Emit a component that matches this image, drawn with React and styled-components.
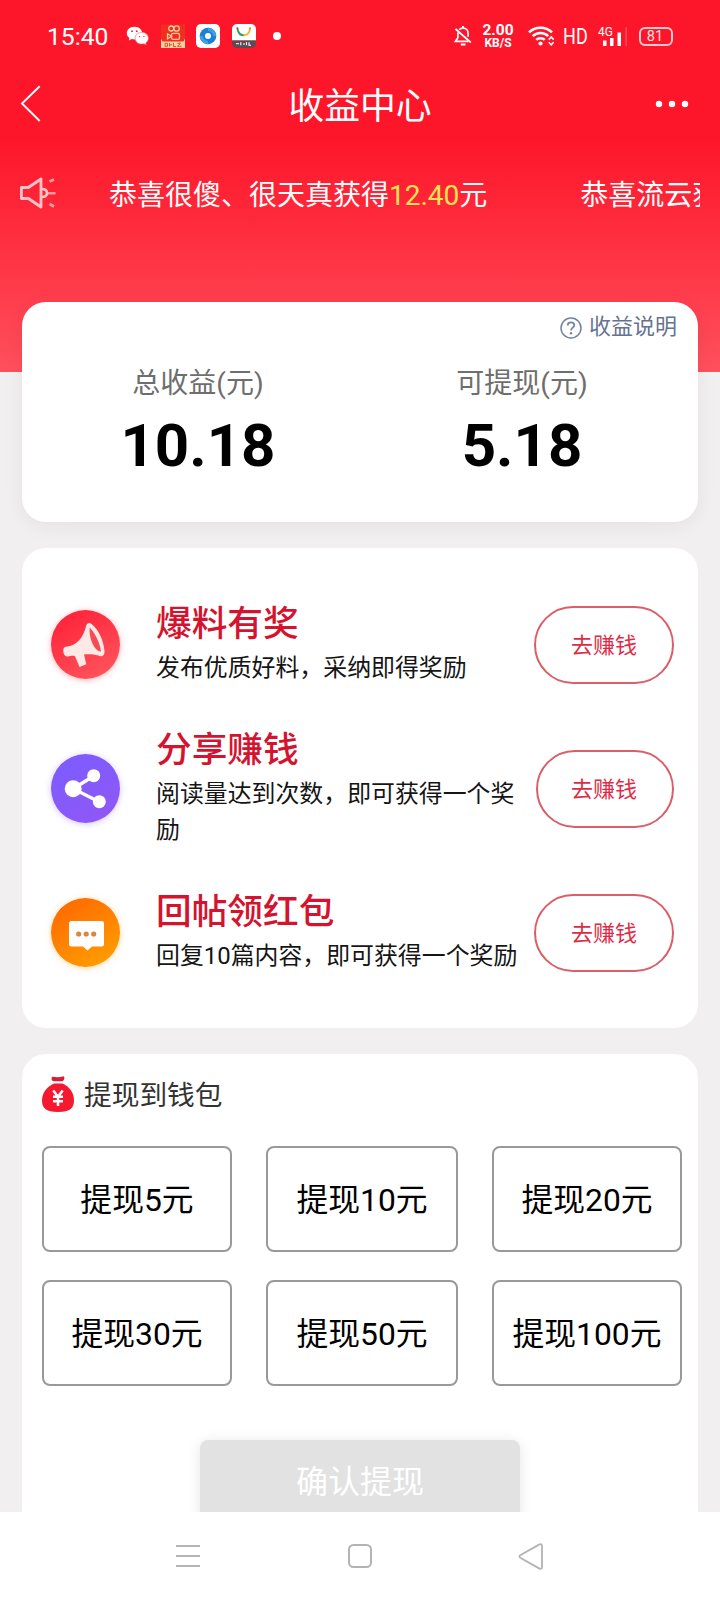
import React from 'react';
import styled, { createGlobalStyle } from 'styled-components';

const GlobalStyle = createGlobalStyle`
  * {
    box-sizing: border-box;
  }

  body {
    margin: 0;
    background: #f2eff0;
    font-family: Roboto, 'Noto Sans CJK SC', sans-serif;
  }

  svg {
    display: block;
    flex: none;
  }

  button {
    padding: 0;
    font-family: inherit;
  }
`;

const tasks = [
  { id: 'report', title: '爆料有奖', desc: '发布优质好料，采纳即得奖励', buttonWidth: 140 },
  { id: 'share', title: '分享赚钱', desc: '阅读量达到次数，即可获得一个奖励', buttonWidth: 138 },
  { id: 'reply', title: '回帖领红包', desc: '回复10篇内容，即可获得一个奖励', buttonWidth: 140 },
];

const amounts = [5, 10, 20, 30, 50, 100];

const WechatIcon = () => (
  <svg width="23" height="20" viewBox="0 0 22 20">
    <path d="M8 .8C3.600.8.3 3.600.3 7.200c0 2 1 3.600 2.600 4.700L2.300 14.500l2.900-1.500c.9.300 1.800.400 2.800.400 4.400 0 7.700-2.700 7.700-6.200S12.400.8 8 .8z" fill="#fff" />
    <path d="M15.300 6.300c-3.800 0-6.700 2.500-6.700 5.900s2.900 5.900 6.700 5.900c.8 0 1.500-.1 2.200-.3l2.300 1.300-.5-2.200c1.500-1 2.600-2.600 2.600-4.700 0-3.400-2.900-5.900-6.600-5.900z" fill="#fff" stroke="#fc5a66" strokeWidth=".6" />
    <circle cx="5.500" cy="5.200" r=".9" fill="#fc172a" />
    <circle cx="10.300" cy="5.200" r=".9" fill="#fc172a" />
    <circle cx="13.200" cy="10.600" r=".7" fill="#fc172a" />
    <circle cx="17.400" cy="10.600" r=".7" fill="#fc172a" />
  </svg>
);

const VideoAppIcon = () => (
  <svg width="24" height="24" viewBox="0 0 24 24">
    <rect y=".5" width="24" height="23.500" fill="#f0301f" />
    <g fill="none" stroke="#ffc9a0" strokeWidth="1.300">
      <circle cx="10.200" cy="4.500" r="2.500" />
      <circle cx="15.600" cy="4.500" r="2.700" />
      <rect x="10.500" y="9.300" width="8" height="6" rx="1.600" />
      <path d="M10.500 12.300 6.500 9.800v5z" />
    </g>
    <path d="M0 14.500l1.500 3h21l1.500-3v9.500H0z" fill="#ffd2a0" />
    <path d="M4 19.300h2.500v3H4zM8.500 19v3.500M8.500 20.800h2.500M12.500 19v3.500h2.500M16.500 19.300h3l-3 3h4" fill="none" stroke="#e2502f" strokeWidth="1" />
  </svg>
);

const EyeAppIcon = () => (
  <svg width="24" height="24" viewBox="0 0 24 24">
    <rect width="24" height="24" rx="5" fill="#fff" />
    <circle cx="12" cy="12" r="8.300" fill="#1b7fd6" />
    <path d="M12 3.700a8.300 8.300 0 0 1 8.300 8.300h-3.300a5 5 0 0 0-5-5z" fill="#3f9fe6" />
    <path d="M12 20.300A8.300 8.300 0 0 1 3.700 12H7a5 5 0 0 0 5 5z" fill="#3f9fe6" />
    <circle cx="12" cy="12" r="3" fill="#fff" />
    <circle cx="12" cy="12" r="1" fill="#cfe6f8" />
  </svg>
);

const SmileAppIcon = () => (
  <svg width="24" height="24" viewBox="0 0 24 24">
    <path d="M5 0h14a5 5 0 0 1 5 5v11.500H0V5a5 5 0 0 1 5-5z" fill="#fff" />
    <path d="M5.500 5c.6 3.800 3 6.300 6.500 6.300" fill="none" stroke="#3aa06b" strokeWidth="2" />
    <path d="M11.500 11.300c3.400 0 6-2.200 6.500-6.300" fill="none" stroke="#f2b63c" strokeWidth="2" />
    <circle cx="5.400" cy="4.300" r="1.100" fill="#a04a36" />
    <circle cx="18" cy="4.300" r="1.100" fill="#e8863c" />
    <path d="M0 16.500h24V19a5 5 0 0 1-5 5H5a5 5 0 0 1-5-5z" fill="#5d4a55" />
    <path d="M4 19.800h3M8.800 18.300v3M11 20h2M14.500 18.300v3M17 18.300v3h2" stroke="#fff" strokeWidth="1.100" fill="none" />
  </svg>
);

const BellOffIcon = () => (
  <svg width="18" height="22" viewBox="0 0 18 22" fill="none" stroke="#fff" strokeWidth="1.700">
    <path d="M5.200 4.700C6.300 3.500 7.500 3.100 9 3.100c3.200 0 5.100 2.400 5.100 5.300v3.300M3.900 7.500v5.300L1.500 16.300h13" />
    <path d="M9 1v2M6.800 19.500h4.700" strokeWidth="2" />
    <path d="M1.500 4 16.800 17.500" />
  </svg>
);

const WifiIcon = () => (
  <svg width="28" height="22" viewBox="0 0 28 22" fill="none" stroke="#fff">
    <path d="M1 7.400a16.500 16.500 0 0 1 23 0" strokeWidth="2.600" />
    <path d="M4.700 11.200a11 11 0 0 1 15.600 0" strokeWidth="2.600" />
    <path d="M8.300 14.900a6 6 0 0 1 8.400 0" strokeWidth="2.600" />
    <circle cx="12.500" cy="18.500" r="2.100" fill="#fff" stroke="none" />
    <path d="M20.800 14.600l2.400-2.600 2.400 2.600M20.800 17.200l2.400 2.600 2.400-2.600" strokeWidth="1.600" />
  </svg>
);

const SignalBars = () => (
  <svg width="26" height="19" viewBox="0 0 26 19" fill="#fff">
    <rect x="1" y="13.500" width="3.500" height="5.500" />
    <rect x="8" y="11" width="3.500" height="8" />
    <rect x="15.500" y="5.500" width="3.500" height="13.500" />
    <rect x="23.500" y="0" width="1.200" height="19" opacity=".3" />
  </svg>
);

const BackIcon = () => (
  <svg width="22" height="38" viewBox="0 0 22 38" fill="none" stroke="#fff" strokeWidth="1.900">
    <path d="M19.700 1.300 2 18.500 19.700 36" />
  </svg>
);

const MoreIcon = () => (
  <svg width="34" height="8" viewBox="0 0 34 8" fill="#fff">
    <circle cx="4" cy="4" r="3.200" />
    <circle cx="17" cy="4" r="3.200" />
    <circle cx="30" cy="4" r="3.200" />
  </svg>
);

const SpeakerIcon = () => (
  <svg width="36" height="32" viewBox="0 0 36 32" fill="none" stroke="#ffc3c8" strokeWidth="2.800">
    <path d="M1.400 10.500h7L21 2v28L8.400 21.500h-7z" strokeLinejoin="round" />
    <path d="M22 12c3.200 0 5 1.700 5 4s-1.800 4-5 4" strokeWidth="2.600" />
    <path d="M29.500 4.500l4.500-2M28 16.300h7.500M29.500 27l4.500 2.500" strokeWidth="2.600" opacity=".75" />
  </svg>
);

const HelpIcon = () => (
  <svg width="22" height="22" viewBox="0 0 22 22" fill="none" stroke="#7482a0" strokeWidth="1.500">
    <circle cx="11" cy="11" r="10" />
    <path d="M7.700 8.600c0-2 1.400-3.200 3.300-3.200s3.300 1.200 3.300 2.900c0 2.300-3.300 2.500-3.300 5.200" strokeWidth="1.800" />
    <circle cx="11" cy="16.200" r="1.200" fill="#7482a0" stroke="none" />
  </svg>
);

const HornGlyph = () => (
  <svg width="69" height="69" viewBox="0 0 69 69">
    <path d="M12.300 39.500c.3-2 1.700-2.700 4.200-3C26 35 32 28.500 35.300 15.500c.6-2.500 3.200-3.200 5.200-1.500C47.500 19.500 52.500 30 53.500 41c.3 3.800-1.600 6-4.600 5-5-1.700-10-2.300-15.900-1.500l2.300 9.800-6.800 2.800-4.500-10.800c-1.700-1.200-4.500 0-7 .3-3.500 0-5-3-4.700-7.100z" fill="#ffe9e7" />
    <path d="M38.700 17.500c5.300 5.500 10.300 15 11.300 24-3.500.3-7.300-4-9.500-10.500-1.600-4.500-2.300-9-1.800-13.500z" fill="#f94a52" />
  </svg>
);

const ShareGlyph = () => (
  <svg width="69" height="69" viewBox="0 0 69 69" fill="#fff">
    <path d="M42.700 22 22.200 34.700 48 47.700" fill="none" stroke="#fff" strokeWidth="3.400" />
    <circle cx="22.200" cy="34.700" r="8.500" />
    <circle cx="42.700" cy="21.700" r="6.500" />
    <circle cx="48.300" cy="47.700" r="6.500" />
  </svg>
);

const ChatGlyph = () => (
  <svg width="69" height="69" viewBox="0 0 69 69">
    <path d="M20.500 23h30a2.500 2.500 0 0 1 2.500 2.500v20.500a2.500 2.500 0 0 1-2.500 2.500H41l-4.500 4-4.500-4H20.500a2.500 2.500 0 0 1-2.500-2.500V25.500a2.500 2.500 0 0 1 2.500-2.500z" fill="#fff" />
    <g fill="#d9873f">
      <circle cx="27.700" cy="36" r="2.600" />
      <circle cx="35.200" cy="36" r="2.600" />
      <circle cx="42.700" cy="36" r="2.600" />
    </g>
  </svg>
);

const MoneyBagIcon = () => (
  <svg width="32" height="36" viewBox="0 0 32 36">
    <path d="M10.500.8c4 .6 7.500.6 11.300-.5 1.200 1.600.5 3.800-1.300 5h-9C9.500 4.500 8.800 2.300 10.500.8z" fill="#d81e34" />
    <path d="M12 7.500h8.500C27 10 32 17 32 24c0 8-3.500 12-16 12S0 32 0 24C0 17 5.500 10 12 7.500z" fill="#f5182f" />
    <path d="M11.300 14.500l4.700 6.300 4.700-6.300M16 20.500V30M11 20.800h10M11 25.300h10" fill="none" stroke="#fff" strokeWidth="2.500" />
  </svg>
);

const glyphs = {
  report: <HornGlyph />,
  share: <ShareGlyph />,
  reply: <ChatGlyph />,
};

const StatusBar = () => (
  <StatusRow>
    <Clock>15:40</Clock>
    <AppIcons>
      <WechatIcon />
      <VideoAppIcon />
      <EyeAppIcon />
      <SmileAppIcon />
    </AppIcons>
    <NoticeDot />
    <StatusRight>
      <BellOffIcon />
      <NetSpeed>
        <SpeedValue>2.00</SpeedValue>
        <SpeedUnit>KB/S</SpeedUnit>
      </NetSpeed>
      <WifiIcon />
      <HdLabel>HD</HdLabel>
      <Signal>
        <NetworkType>4G</NetworkType>
        <SignalBars />
      </Signal>
      <Battery>81</Battery>
    </StatusRight>
  </StatusRow>
);

const Task = ({ data }) => {
  const { id, title, desc, buttonWidth } = data;

  return (
    <TaskRow>
      <TaskIcon $type={id}>{glyphs[id]}</TaskIcon>
      <TaskText>
        <TaskTitle>{title}</TaskTitle>
        <TaskDesc>{desc}</TaskDesc>
      </TaskText>
      <EarnButton $width={buttonWidth}>去赚钱</EarnButton>
    </TaskRow>
  );
};

const App = () => (
  <Screen>
    <GlobalStyle />
    <Content>
      <StatusBar />
      <TitleBar>
        <BackIcon />
        <PageTitle>收益中心</PageTitle>
        <MoreIcon />
      </TitleBar>
      <Notice>
        <SpeakerIcon />
        <NoticeTrack>
          <span>恭喜很傻、很天真获得<Money>12.40</Money>元</span>
          <span>恭喜流云获得</span>
        </NoticeTrack>
      </Notice>
      <SummaryCard>
        <HelpLink>
          <HelpIcon />
          <HelpText>收益说明</HelpText>
        </HelpLink>
        <Totals>
          <Total>
            <TotalLabel>总收益(元)</TotalLabel>
            <TotalValue>10.18</TotalValue>
          </Total>
          <Total>
            <TotalLabel>可提现(元)</TotalLabel>
            <TotalValue>5.18</TotalValue>
          </Total>
        </Totals>
      </SummaryCard>
      <TaskCard>
        {tasks.map((task) => <Task key={task.id} data={task} />)}
      </TaskCard>
      <WalletCard>
        <WalletTitle>
          <MoneyBagIcon />
          <WalletTitleText>提现到钱包</WalletTitleText>
        </WalletTitle>
        <AmountGrid>
          {amounts.map((amount) => (
            <AmountButton key={amount}>{`提现${amount}元`}</AmountButton>
          ))}
        </AmountGrid>
        <ConfirmButton>确认提现</ConfirmButton>
      </WalletCard>
    </Content>
    <NavBar>
      <svg width="24" height="24" viewBox="0 0 24 24" stroke="#b3b3b3" strokeWidth="2">
        <path d="M0 2h24M0 12h24M0 22h24" />
      </svg>
      <svg width="24" height="24" viewBox="0 0 24 24" fill="none" stroke="#b3b3b3" strokeWidth="2">
        <rect x="1" y="1" width="22" height="22" rx="4.500" />
      </svg>
      <NavBackIcon width="25" height="27" viewBox="0 0 25 27" fill="none" stroke="#b3b3b3" strokeWidth="1.800" strokeLinejoin="round">
        <path d="M21.500 1.400 2.200 12.300c-1 .6-1 1.800 0 2.400l19.300 10.900c1 .6 2.500 0 2.500-1.400V2.800c0-1.400-1.500-2-2.500-1.400z" />
      </NavBackIcon>
    </NavBar>
  </Screen>
);

const Screen = styled.div`
  display: flex;
  flex-direction: column;
  width: 720px;
  height: 1600px;
  overflow: hidden;
`;

const Content = styled.main`
  flex: 1;
  min-height: 0;
  overflow: hidden;
  background: linear-gradient(#fd162a 0, #fd162a 140px, #ff505d 372px) no-repeat 0 0 / 100% 372px;
`;

const StatusRow = styled.div`
  display: flex;
  align-items: center;
  height: 72px;
  padding: 0 47px 0 47px;
  color: #fff;
`;

const Clock = styled.span`
  width: 79px;
  padding-top: 1px;
  font-size: 24.700px;
  line-height: 30px;
`;

const AppIcons = styled.div`
  display: flex;
  align-items: center;
  gap: 11.500px;
`;

const NoticeDot = styled.span`
  width: 8px;
  height: 8px;
  margin-left: 17px;
  border-radius: 50%;
  background: #fff;
`;

const StatusRight = styled.div`
  display: flex;
  align-items: center;
  margin-left: auto;
`;

const NetSpeed = styled.div`
  display: flex;
  flex-direction: column;
  align-items: center;
  width: 32px;
  margin: 1px 14px 0 10px;
  font-weight: 700;
`;

const SpeedValue = styled.span`
  font-size: 15.500px;
  line-height: 13px;
`;

const SpeedUnit = styled.span`
  font-size: 12px;
  line-height: 12px;
`;

const HdLabel = styled.span`
  width: 28px;
  margin: 1px 7px 0 7px;
  font-size: 21.500px;
  line-height: 24px;
  transform: scaleX(0.84);
  transform-origin: 0 50%;
`;

const Signal = styled.div`
  position: relative;
  display: flex;
  margin: 0 11px 0 4px;
`;

/* sits on top of the shorter bars */
const NetworkType = styled.span`
  position: absolute;
  top: -2px;
  left: -4px;
  font-size: 13.500px;
  line-height: 13px;
  transform: scaleX(0.88);
  transform-origin: 0 50%;
`;

const Battery = styled.span`
  width: 34px;
  height: 19px;
  border: 2px solid #ffc9cd;
  border-radius: 6px;
  color: #ffe3e5;
  font-size: 14.500px;
  line-height: 16px;
  text-align: center;
  text-indent: -2px;
`;

const TitleBar = styled.header`
  display: flex;
  align-items: center;
  justify-content: space-between;
  height: 64px;
  padding: 0 31px 0 20px;
`;

const PageTitle = styled.h1`
  margin: 0;
  padding: 6px 0 0 23px;
  color: #fff;
  font-size: 35.800px;
  font-weight: 400;
  line-height: 58px;
`;

const Notice = styled.div`
  display: flex;
  align-items: center;
  height: 40px;
  margin: 37px 20px 0;
`;

const NoticeTrack = styled.div`
  display: flex;
  flex: 1;
  gap: 93px;
  padding: 5px 0 0 53px;
  overflow: hidden;
  color: #fff;
  font-size: 28px;
  line-height: 40px;
  white-space: nowrap;
`;

const Money = styled.span`
  color: #fbe454;
`;

const Card = styled.section`
  margin: 0 22px;
  border-radius: 24px;
  background: #fff;
`;

const SummaryCard = styled(Card)`
  height: 220px;
  margin-top: 89px;
  padding: 9px 14px 0;
  box-shadow: 0 4px 20px rgba(0, 0, 0, 0.06);
`;

const HelpLink = styled.div`
  display: flex;
  align-items: center;
  justify-content: flex-end;
  gap: 7px;
  height: 34px;
  padding-right: 7px;
`;

const HelpText = styled.span`
  padding-bottom: 3px;
  color: #66738f;
  font-size: 22px;
  line-height: 29px;
`;

const Totals = styled.div`
  display: grid;
  grid-template-columns: 1fr 1fr;
  margin-top: 18px;
`;

const Total = styled.div`
  display: flex;
  flex-direction: column;
  align-items: center;
`;

const TotalLabel = styled.span`
  color: #6e6e6e;
  font-size: 28px;
  line-height: 42px;
`;

const TotalValue = styled.strong`
  color: #000;
  font-size: 60px;
  font-weight: 700;
  line-height: 82px;
`;

const TaskCard = styled(Card)`
  margin-top: 26px;
  padding: 25px 24px 23px 28px;
`;

const TaskRow = styled.div`
  display: flex;
  align-items: center;
  height: 144px;
`;

const iconColors = {
  report: ['linear-gradient(150deg, #ff1c35, #ff5a60)', 'rgba(255, 70, 80, 0.4)'],
  share: ['linear-gradient(150deg, #7a5cff, #9257f5)', 'rgba(130, 90, 250, 0.35)'],
  reply: ['linear-gradient(150deg, #ff6400, #ffa300)', 'rgba(255, 140, 0, 0.35)'],
};

const TaskIcon = styled.div`
  flex: none;
  width: 69px;
  height: 69px;
  margin: 0 36px 2px 1px;
  border-radius: 50%;
  background: ${(props) => iconColors[props.$type][0]};
  box-shadow: 0 1px 6px ${(props) => iconColors[props.$type][1]};
`;

const TaskText = styled.div`
  flex: 1;
  min-width: 0;
`;

const TaskTitle = styled.h2`
  margin: 0 0 6px;
  color: #d4142f;
  font-size: 35.700px;
  font-weight: 500;
  line-height: 40px;
`;

const TaskDesc = styled.p`
  margin: 0;
  color: #151515;
  font-size: 23.900px;
  line-height: 36px;
`;

const EarnButton = styled.button`
  flex: none;
  width: ${(props) => props.$width}px;
  height: 78px;
  padding: 0 ${(props) => 140 - props.$width}px 5px 0;
  border: 2px solid #d9606a;
  border-radius: 39px;
  background: #fff;
  color: #dc2c47;
  font-size: 22px;
`;

const WalletCard = styled(Card)`
  display: flex;
  flex-direction: column;
  margin-top: 26px;
  padding: 20px 16px 0 20px;
`;

const WalletTitle = styled.div`
  display: flex;
  align-items: center;
  gap: 10px;
  height: 40px;
`;

const WalletTitleText = styled.h3`
  margin: 0;
  padding-top: 3px;
  color: #333;
  font-size: 27.700px;
  font-weight: 400;
  line-height: 37px;
`;

const AmountGrid = styled.div`
  display: grid;
  grid-template-columns: 190px 192px 190px;
  grid-auto-rows: 106px;
  justify-content: space-between;
  row-gap: 28px;
  margin-top: 32px;
`;

const AmountButton = styled.button`
  padding-bottom: 5px;
  border: 2px solid #999;
  border-radius: 8px;
  background: #fff;
  color: #000;
  font-size: 31.800px;
`;

const ConfirmButton = styled.button`
  align-self: center;
  width: 320px;
  height: 84px;
  margin: 54px 0 40px -4px;
  padding-bottom: 6px;
  border: 0;
  border-radius: 8px;
  background: #e2e2e2;
  box-shadow: 0 2px 14px rgba(0, 0, 0, 0.1);
  color: #fff;
  font-size: 32px;
`;

const NavBar = styled.nav`
  display: flex;
  align-items: center;
  justify-content: space-between;
  height: 88px;
  padding: 0 177px 0 176px;
  background: #fff;
`;

const NavBackIcon = styled.svg`
  margin-left: -2px;
`;

export default App;
